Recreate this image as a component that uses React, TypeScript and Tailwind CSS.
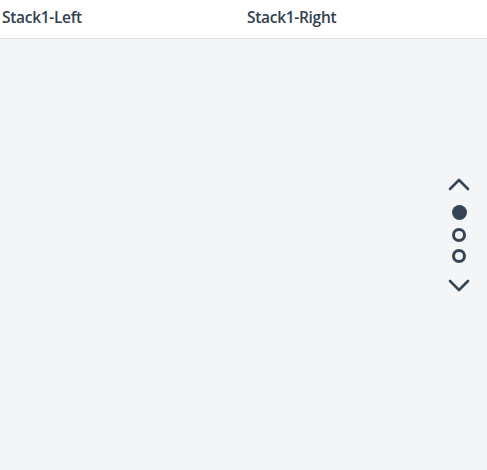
import React from 'react';

const Chevron: React.FC<{ up?: boolean }> = ({ up }) => (
  <svg width="22" height="14" viewBox="0 0 22 14" fill="none">
    <path
      d={up ? 'M2 12 L11 3 L20 12' : 'M2 2 L11 11 L20 2'}
      stroke="#354556"
      strokeWidth="2.6"
      strokeLinecap="round"
      strokeLinejoin="round"
    />
  </svg>
);

const App: React.FC = () => {
  return (
    <div className="w-[487px] h-[470px] flex flex-col bg-[#f4f5f7]" style={{ fontFamily: '"Open Sans", "Noto Sans", sans-serif' }}>
      <header className="h-[39px] shrink-0 bg-white border-b border-[#d9dde2] flex items-center pb-[2px]">
        <div className="w-[245px] pl-[2px] text-[15.5px] font-semibold text-[#32404f] tracking-[-0.3px]">Stack1-Left</div>
        <div className="pl-[2px] text-[15.5px] font-semibold text-[#32404f] tracking-[-0.3px]">Stack1-Right</div>
      </header>

      <main className="flex-1 flex justify-end pr-[17px] pt-[138px]">
        <div className="flex flex-col items-center">
          <Chevron up />
          <div className="mt-[14px] w-[15px] h-[15px] rounded-full bg-[#354556]" />
          <div className="mt-[8px] w-[14px] h-[14px] rounded-full border-[3px] border-[#354556]" />
          <div className="mt-[7px] w-[14px] h-[14px] rounded-full border-[3px] border-[#354556]" />
          <div className="mt-[16px]">
            <Chevron />
          </div>
        </div>
      </main>
    </div>
  );
};

export default App;
